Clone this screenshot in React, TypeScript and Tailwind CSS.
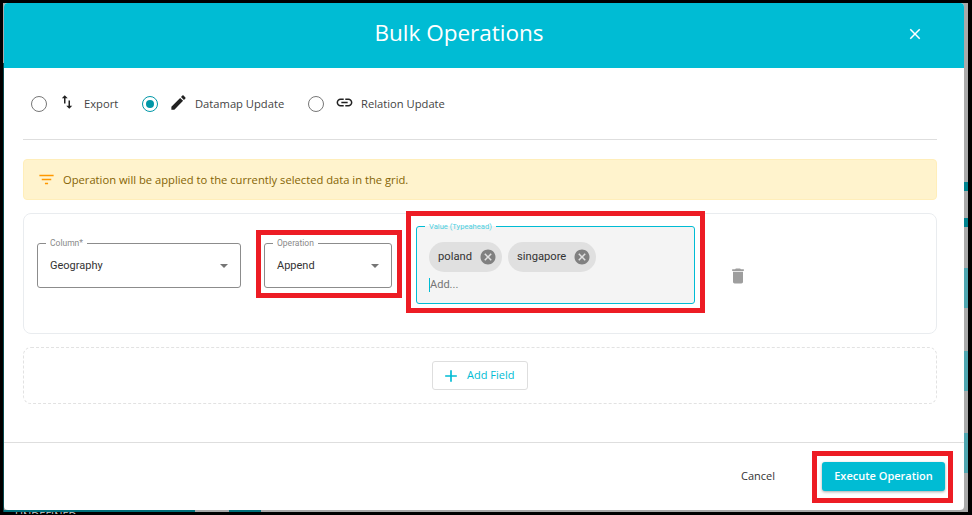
import { ReactNode } from 'react';

const Icon = ({ d, className }: { d: string; className: string }) => (
  <svg viewBox="0 0 24 24" fill="currentColor" className={className}>
    <path d={d} />
  </svg>
);

const icons = {
  swap: 'M16 17.01V10h-2v7.01h-3L15 21l4-3.99h-3zM9 3L5 6.99h3V14h2V6.99h3L9 3z',
  edit: 'M3 17.25V21h3.75L17.81 9.94l-3.75-3.75L3 17.25zM20.71 7.04c.39-.39.39-1.02 0-1.41l-2.34-2.34c-.39-.39-1.02-.39-1.41 0l-1.83 1.83 3.75 3.75 1.83-1.83z',
  link: 'M3.9 12c0-1.71 1.39-3.1 3.1-3.1h4V7H7c-2.76 0-5 2.24-5 5s2.24 5 5 5h4v-1.9H7c-1.71 0-3.1-1.39-3.1-3.1zM8 13h8v-2H8v2zm9-6h-4v1.9h4c1.71 0 3.1 1.39 3.1 3.1s-1.39 3.1-3.1 3.1h-4V17h4c2.76 0 5-2.24 5-5s-2.24-5-5-5z',
  filter: 'M10 18h4v-2h-4v2zM3 6v2h18V6H3zm3 7h12v-2H6v2z',
  trash: 'M6 19c0 1.1.9 2 2 2h8c1.1 0 2-.9 2-2V7H6v12zM19 4h-3.5l-1-1h-5l-1 1H5v2h14V4z',
  cancel: 'M12 2C6.47 2 2 6.47 2 12s4.47 10 10 10 10-4.47 10-10S17.53 2 12 2zm5 13.59L15.59 17 12 13.41 8.41 17 7 15.59 10.59 12 7 8.41 8.41 7 12 10.59 15.59 7 17 8.41 13.41 12 17 15.59z',
  add: 'M19 13h-6v6h-2v-6H5v-2h6V5h2v6h6v2z',
  close: 'M19 6.41L17.59 5 12 10.59 6.41 5 5 6.41 10.59 12 5 17.59 6.41 19 12 13.41 17.59 19 19 17.59 13.41 12z',
};

const RadioOption = ({ label, icon, checked, className }: { label: string; icon: ReactNode; checked?: boolean; className: string }) => (
  <div className={`flex items-center ${className}`}>
    <span className={`flex h-4 w-4 items-center justify-center rounded-full border ${checked ? 'border-[#0097a7]' : 'border-[#777777]'}`}>
      {checked && <span className="h-2 w-2 rounded-full bg-[#0097a7]" />}
    </span>
    {icon}
    <span className="mt-[2px] text-[11.2px] text-[#444444]">{label}</span>
  </div>
);

const SelectField = ({ label, value, className }: { label: string; value: string; className: string }) => (
  <div className={`relative flex h-[45px] items-center justify-between rounded-[3px] border border-[#8c8c8c] bg-white pl-3 pr-[12px] ${className}`}>
    <span className="absolute -top-[5px] left-[8px] bg-white px-[4px] font-['Roboto',sans-serif] text-[8.5px] leading-[9px] text-[#8a8a8a]">{label}</span>
    <span className="mt-[1px] font-['Roboto',sans-serif] text-[11px] text-[#333333]">{value}</span>
    <span className="h-0 w-0 border-x-[4.5px] border-t-[4.5px] border-x-transparent border-t-[#757575]" />
  </div>
);

const Chip = ({ label }: { label: string }) => (
  <div className="flex h-[30px] items-center rounded-full bg-[#e0e0e0] pl-[9px] pr-[5px]">
    <span className="mt-[1px] font-['Roboto',sans-serif] text-[11.2px] text-[#333333]">{label}</span>
    <Icon d={icons.cancel} className="ml-[7px] h-[18px] w-[18px] text-[#808080]" />
  </div>
);

export default function App() {
  return (
    <div className="relative h-[515px] w-[972px] overflow-hidden bg-black pb-[3px] pl-[3px] pr-[4px] pt-[3px] font-['Open_Sans',sans-serif]">
      <div className="relative h-[509px] bg-[#a9a9a9] pl-[1px] pr-[4px]">
        {/* bits of the page behind the modal */}
        <div className="absolute bottom-0 left-0 top-[60px] w-[1px] bg-[#06494f]" />
        <div className="absolute bottom-0 left-[1px] h-[2px] w-[191px] bg-[#00707a]" />
        <div className="absolute bottom-0 left-[226px] h-[2px] w-[32px] bg-[#00707a]" />
        <div className="absolute right-0 top-[179px] h-[9px] w-[4px] bg-[#00838f]" />
        <div className="absolute right-0 top-[215px] h-[9px] w-[4px] bg-[#00838f]" />
        <div className="absolute right-0 top-[265px] h-[40px] w-[4px] bg-[#4fa6b0]" />
        <div className="absolute right-0 top-[348px] h-[40px] w-[4px] bg-[#4fa6b0]" />
        <div className="absolute right-0 top-[430px] h-[40px] w-[4px] bg-[#4fa6b0]" />

        <div className="relative flex h-[507px] flex-col overflow-hidden rounded-[4px] bg-white">
          <div className="relative flex h-[65px] shrink-0 items-center justify-center bg-[#00bcd4] pb-[4px] pr-[50px] text-white">
            <h1 className="text-[22.5px] leading-none">Bulk Operations</h1>
            <Icon d={icons.close} className="absolute left-[902px] top-[22px] h-[18px] w-[18px]" />
          </div>

          <div className="flex flex-1 flex-col pl-[19px] pr-[27px]">
            <div className="flex h-[72px] shrink-0 items-center border-b border-[#dedede] pl-[8px]">
              <RadioOption
                label="Export"
                className="w-[111px]"
                icon={<Icon d={icons.swap} className="mb-[3px] ml-[11px] mr-[8px] h-[18px] w-[18px] text-[#222222]" />}
              />
              <RadioOption
                label="Datamap Update"
                checked
                className="w-[166px]"
                icon={<Icon d={icons.edit} className="mb-[3px] ml-[11px] mr-[7px] h-[19px] w-[19px] text-[#222222]" />}
              />
              <RadioOption
                label="Relation Update"
                className=""
                icon={<Icon d={icons.link} className="mb-[3px] ml-[11px] mr-[7px] h-[19px] w-[19px] text-[#222222]" />}
              />
            </div>

            <div className="mt-[19px] flex h-[41px] shrink-0 items-center rounded-[4px] border border-[#ffeeba] bg-[#fff3cd] pl-[13px]">
              <Icon d={icons.filter} className="mr-[7px] h-[19px] w-[19px] text-[#ff9800]" />
              <span className="mt-[1px] text-[11.2px] text-[#856404]">Operation will be applied to the currently selected data in the grid.</span>
            </div>

            <div className="mt-[13px] flex h-[121px] shrink-0 items-start rounded-[8px] border border-[#e9ecef] pl-[13px] pt-[12px]">
              <SelectField label="Column*" value="Geography" className="mt-[17px] w-[204px]" />
              <SelectField label="Operation" value="Append" className="ml-[23px] mt-[17px] w-[128px]" />
              <div className="relative ml-[24px] h-[78px] w-[279px] rounded-[3px] border border-[#00bcd4] bg-[#f4f4f4] pl-[12px] pt-[15px]">
                <span className="absolute -top-[5px] left-[8px] bg-[linear-gradient(to_bottom,white_50%,#f4f4f4_50%)] px-[4px] font-['Roboto',sans-serif] text-[7.6px] leading-[9px] text-[#4dd0e1]">Value (Typeahead)</span>
                <div className="flex gap-[6px]">
                  <Chip label="poland" />
                  <Chip label="singapore" />
                </div>
                <div className="mt-[6px] flex h-[14px] items-center">
                  <span className="h-[14px] w-px bg-[#00bcd4]" />
                  <span className="font-['Roboto',sans-serif] text-[11px] text-[#757575]">Add...</span>
                </div>
              </div>
              <Icon d={icons.trash} className="ml-[33px] mt-[40px] h-[20px] w-[20px] text-[#9e9e9e]" />
            </div>

            <div className="mt-[13px] flex h-[57px] shrink-0 items-center justify-center rounded-[8px] border border-dashed border-[#e2e2e2]">
              <div className="flex h-[29px] w-[96px] items-center rounded-[3px] border border-[#dedede] pl-[8px] text-[#00bcd4]">
                <Icon d={icons.add} className="mr-[6px] h-[20px] w-[20px]" />
                <span className="text-[11px]">Add Field</span>
              </div>
            </div>
          </div>

          <div className="flex h-[68px] shrink-0 items-center justify-end border-t border-[#dedede] pr-[19px]">
            <span className="mr-[47px] text-[11px] text-[#333333]">Cancel</span>
            <div className="flex h-[29px] w-[123px] items-center justify-center rounded-[3px] bg-[#00bcd4] text-[11px] font-semibold text-white shadow-[0_1px_3px_rgba(0,0,0,0.35)]">
              Execute Operation
            </div>
          </div>
        </div>
      </div>

      {/* text of the page behind, cut off under the modal */}
      <div className="absolute left-[15px] top-[510px] h-[4px] w-[62px] overflow-hidden text-[11px] leading-[11px] text-[#c8c8c8]">UNDEFINED</div>

      {/* red annotation boxes drawn over the screenshot */}
      <div className="absolute left-[256px] top-[230px] h-[68px] w-[146px] border-[5px] border-[#ed1c24]" />
      <div className="absolute left-[406px] top-[211px] h-[102px] w-[299px] border-[5px] border-[#ed1c24]" />
      <div className="absolute left-[812px] top-[451px] h-[52px] w-[141px] border-[5px] border-[#ed1c24]" />
    </div>
  );
}
